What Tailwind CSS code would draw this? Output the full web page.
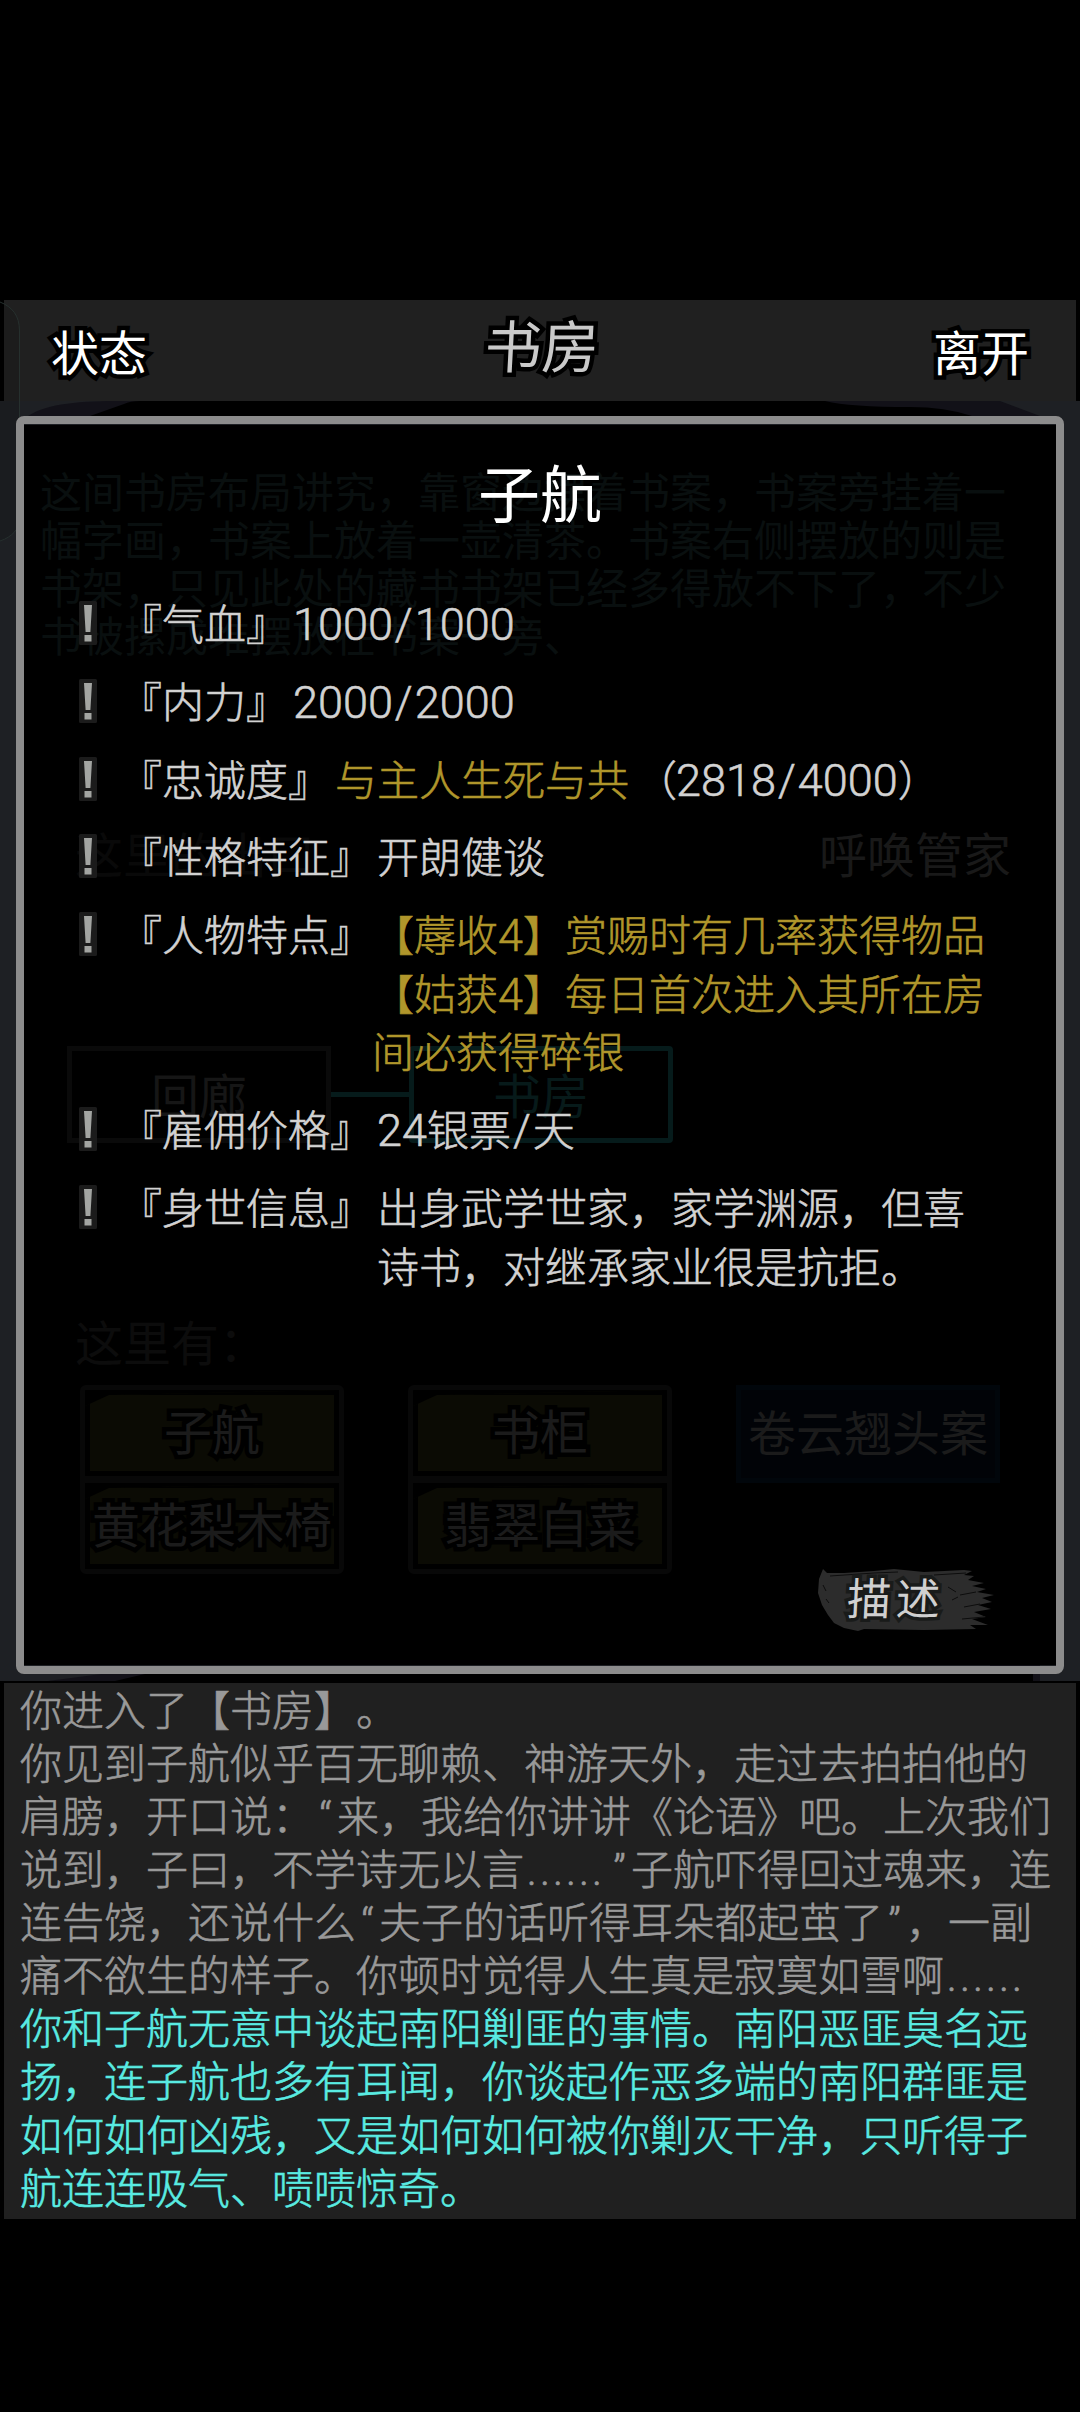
<!DOCTYPE html>
<html lang="zh-CN">
<head>
<meta charset="utf-8">
<title>书房</title>
<script src="https://cdn.jsdelivr.net/npm/@tailwindcss/browser@4"></script>
</head>
<body class="bg-black font-['Noto_Sans_CJK_SC',sans-serif] font-light [text-spacing-trim:space-all]">
<svg class="hidden">
  <symbol id="bang" viewBox="0 0 18 46">
    <path d="M1.500 2.500h15v41h-15z" fill="#1b1b1b" stroke="#1b1b1b" stroke-width="3" stroke-linejoin="round"/>
    <path d="M5 5h8l-1.600 27h-4.800zM5.500 35h7v6.500h-7z" fill="#a3a5a2"/>
  </symbol>
</svg>
<div class="flex h-[2412px] w-[1080px] flex-col overflow-hidden pt-[300px]">
  <header class="mx-1 grid h-[101px] shrink-0 grid-cols-3 items-center bg-[#202020] px-[47px] text-[48px] leading-none font-normal text-white">
    <span class="-mt-px [paint-order:stroke_fill] [-webkit-text-stroke:9px_#000]">状态</span>
    <span class="-mt-[15px] pl-1 text-center text-[57px] text-[#c9c9c9] [paint-order:stroke_fill] [-webkit-text-stroke:9px_#000]"><span class="inline-block -skew-x-3">书房</span></span>
    <span class="-mt-px text-right [paint-order:stroke_fill] [-webkit-text-stroke:9px_#000]">离开</span>
  </header>

  <main class="relative h-[1280px] shrink-0 bg-[#1e2024]">
    <svg class="absolute inset-0 overflow-visible" width="1080" height="1280" fill="none">
      <path d="M28 15C48 2 80 0 124 0H1000L1040 15V1280H48L140 1268H990V15Z" fill="#121118"/>
      <path d="M90 15L124 3Q130 0 140 0H825Q850 6 910 6Q945 6 972 15ZM115 1280L145 1273H1033V1280Z" fill="#000"/>
      <path d="M0 -99C12 -94 19.500 -86 19.500 -70V118C19.500 128 12 136 0 140Z" fill="#000" fill-opacity=".12"/>
      <path d="M0 -99C12 -94 19.500 -86 19.500 -70V118C19.500 128 12 136 0 140" stroke="#26302e"/>
    </svg>

    <section class="absolute inset-x-6 top-6 bottom-4 flex flex-col bg-black px-4 pt-[41px] font-normal">
      <p class="h-[192px] w-[970px] text-[42px] leading-[48px] whitespace-nowrap text-[#090f0f]">这间书房布局讲究，靠窗边摆着书案，书案旁挂着一<br>幅字画，书案上放着一壶清茶。书案右侧摆放的则是<br>书架，只见此处的藏书书架已经多得放不下了，不少<br>书被摞成堆摆放在书案一旁、</p>
      <div class="mt-[170px] flex h-[48px] justify-between pr-[29px] pl-[35px] text-[48px] leading-[48px]"><span class="text-[#090909]">这里的出口</span><span class="text-[#191919]">呼唤管家</span></div>
      <div class="mt-[170px] ml-[27px] flex h-[97px] items-center text-[48px] leading-none">
        <span class="flex h-full w-[264px] items-center justify-center border-[5px] border-[#0a0a0a] pb-1 text-[#161616]">回廊</span>
        <span class="h-[5px] w-[78px] bg-[#061b1b]"></span>
        <span class="flex h-full w-[264px] items-center justify-center rounded-sm border-[5px] border-[#061b1b] pb-1 text-[#071a1a]">书房</span>
      </div>
      <p class="mt-[173px] ml-[35px] h-[48px] text-[48px] leading-[48px] text-[#0c0c0c]">这里有：</p>
      <div class="mt-[21px] ml-[40px] flex gap-[64px] text-[48px] leading-none text-[#1b1b1b]">
        <div class="flex w-[264px] flex-col rounded-md border-[5px] border-[#080808]">
          <div class="flex h-[86px] items-center justify-center border-[5px] border-black bg-[#0b0b04] pb-2 whitespace-nowrap [paint-order:stroke_fill] [-webkit-text-stroke:9px_#000] [clip-path:polygon(24px_5px,100%_0,100%_100%,0_100%,0_16px)]">子航</div>
          <div class="h-[7px] bg-[#080808]"></div>
          <div class="flex h-[86px] items-center justify-center border-[5px] border-black bg-[#0b0b04] pb-2 whitespace-nowrap [paint-order:stroke_fill] [-webkit-text-stroke:9px_#000] [clip-path:polygon(24px_5px,100%_0,100%_100%,0_100%,0_16px)]">黄花梨木椅</div>
        </div>
        <div class="flex w-[264px] flex-col rounded-md border-[5px] border-[#080808]">
          <div class="flex h-[86px] items-center justify-center border-[5px] border-black bg-[#0b0b04] pb-2 whitespace-nowrap [paint-order:stroke_fill] [-webkit-text-stroke:9px_#000] [clip-path:polygon(24px_5px,100%_0,100%_100%,0_100%,0_16px)]">书柜</div>
          <div class="h-[7px] bg-[#080808]"></div>
          <div class="flex h-[86px] items-center justify-center border-[5px] border-black bg-[#0b0b04] pb-2 whitespace-nowrap [paint-order:stroke_fill] [-webkit-text-stroke:9px_#000] [clip-path:polygon(24px_5px,100%_0,100%_100%,0_100%,0_16px)]">翡翠白菜</div>
        </div>
        <div class="flex h-[98px] w-[264px] items-center justify-center border-[5px] border-[#01060b] bg-[#010307] pb-2 whitespace-nowrap">卷云翘头案</div>
      </div>
    </section>

    <section class="absolute top-[15px] right-4 bottom-[7px] left-4 flex flex-col rounded-lg border-8 border-[#8c8c8c] text-[42px] leading-[58.3px] text-[#d2d2d2]">
      <h1 class="mt-[35px] text-center text-[62px] leading-[64px] font-normal text-white">子航</h1>
      <div class="mt-[70px] ml-[55px] flex flex-col gap-[19.8px] [-webkit-text-stroke:0.6px_currentColor]">
        <div class="flex"><svg class="mt-[7px] mr-[23px] h-[46px] w-[18px]"><use href="#bang"/></svg><span>『气血』</span><span class="ml-[5px] pt-[3px] font-['Roboto'] text-[45px] leading-[58px]">1000<span class="mx-[2px]">/</span>1000</span></div>
        <div class="-mt-[3px] flex"><svg class="mt-[7px] mr-[23px] h-[46px] w-[18px]"><use href="#bang"/></svg><span>『内力』</span><span class="ml-[5px] pt-[3px] font-['Roboto'] text-[45px] leading-[58px]">2000<span class="mx-[2px]">/</span>2000</span></div>
        <div class="-mt-[3px] flex"><svg class="mt-[7px] mr-[23px] h-[46px] w-[18px]"><use href="#bang"/></svg><span>『忠诚度』</span><span class="ml-[5px] text-[#b0962b]">与主人生死与共</span><span class="ml-[6px]">（</span><span class="-ml-px pt-[3px] font-['Roboto'] text-[45px] leading-[58px]">2818<span class="mx-[2px]">/</span>4000</span><span>）</span></div>
        <div class="-mt-[3px] flex"><svg class="mt-[7px] mr-[23px] h-[46px] w-[18px]"><use href="#bang"/></svg><span>『性格特征』</span><span class="ml-[5px]">开朗健谈</span></div>
        <div class="flex"><svg class="mt-[7px] mr-[23px] h-[46px] w-[18px]"><use href="#bang"/></svg><span>『人物特点』</span><span class="whitespace-nowrap text-[#b0962b]">【蓐收<span class="font-['Roboto'] text-[45px] leading-none">4</span>】赏赐时有几率获得物品<br>【姑获<span class="font-['Roboto'] text-[45px] leading-none">4</span>】每日首次进入其所在房<br>间必获得碎银</span></div>
        <div class="flex"><svg class="mt-[7px] mr-[23px] h-[46px] w-[18px]"><use href="#bang"/></svg><span>『雇佣价格』</span><span class="ml-[5px]"><span class="font-['Roboto'] text-[45px] leading-none">24</span>银票<span class="mx-[2px] font-['Roboto'] text-[45px] leading-none">/</span>天</span></div>
        <div class="flex"><svg class="mt-[7px] mr-[23px] h-[46px] w-[18px]"><use href="#bang"/></svg><span>『身世信息』</span><span class="ml-[5px] whitespace-nowrap">出身武学世家，家学渊源，但喜<br>诗书，对继承家业很是抗拒。</span></div>
      </div>
      <button class="absolute right-[58px] bottom-[33px] flex h-[66px] w-[184px] items-center justify-center">
        <svg class="absolute inset-0" viewBox="0 0 184 66" width="184" height="66">
          <path d="M9 2L13 6L30 6L60 4L80 2L110 5L150 3L158 4L150 8L160 9L154 13L170 16L158 19L172 22L163 25L180 28L168 31L178 35L164 38L177 42L160 45L172 50L158 52L174 58L156 58L162 62L110 63L50 62L44 64L30 61L20 56L14 48L8 38L4 26L5 12Z" fill="#2c2c2c"/>
          <path d="M16 9L60 6L84 5M120 8L152 6M134 20l8 5M146 28l16-3M138 33l6-3M150 40l16-3M148 52l22-2M9 18l3 6M12 32l3 4" stroke="#0d0d0d" fill="none"/>
        </svg>
        <span class="relative -ml-5 inline-block -skew-x-3 pb-2 text-[44px] leading-none font-normal tracking-[5px] text-[#d0d0d0] [paint-order:stroke_fill] [-webkit-text-stroke:7px_#191b1a]">描述</span>
      </button>
    </section>
  </main>

  <section class="mx-1 mt-[2px] h-[536px] shrink-0 bg-[#202020] pl-4 text-[42px] leading-[53.06px] whitespace-nowrap [-webkit-text-stroke:0.6px_currentColor]">
    <div class="-mt-[2px]">
      <p class="text-[#999]">你进入了【书房】。<br>你见到子航似乎百无聊赖、神游天外，走过去拍拍他的<br>肩膀，开口说：<span class="inline-block w-[23px] text-center font-['Roboto'] leading-none">“</span>来，我给你讲讲《论语》吧。上次我们<br>说到，子曰，不学诗无以言<span class="inline-block w-[84px] text-center font-['Roboto'] leading-none tracking-[3px]">......</span><span class="inline-block w-[23px] text-center font-['Roboto'] leading-none">”</span>子航吓得回过魂来，连<br>连告饶，还说什么<span class="inline-block w-[23px] text-center font-['Roboto'] leading-none">“</span>夫子的话听得耳朵都起茧了<span class="inline-block w-[23px] text-center font-['Roboto'] leading-none">”</span>，一副<br>痛不欲生的样子。你顿时觉得人生真是寂寞如雪啊<span class="inline-block w-[84px] text-center font-['Roboto'] leading-none tracking-[3px]">......</span></p>
      <p class="text-[#59ebe2]">你和子航无意中谈起南阳剿匪的事情。南阳恶匪臭名远<br>扬，连子航也多有耳闻，你谈起作恶多端的南阳群匪是<br>如何如何凶残，又是如何如何被你剿灭干净，只听得子<br>航连连吸气、啧啧惊奇。</p>
    </div>
  </section>
</div>
</body>
</html>
